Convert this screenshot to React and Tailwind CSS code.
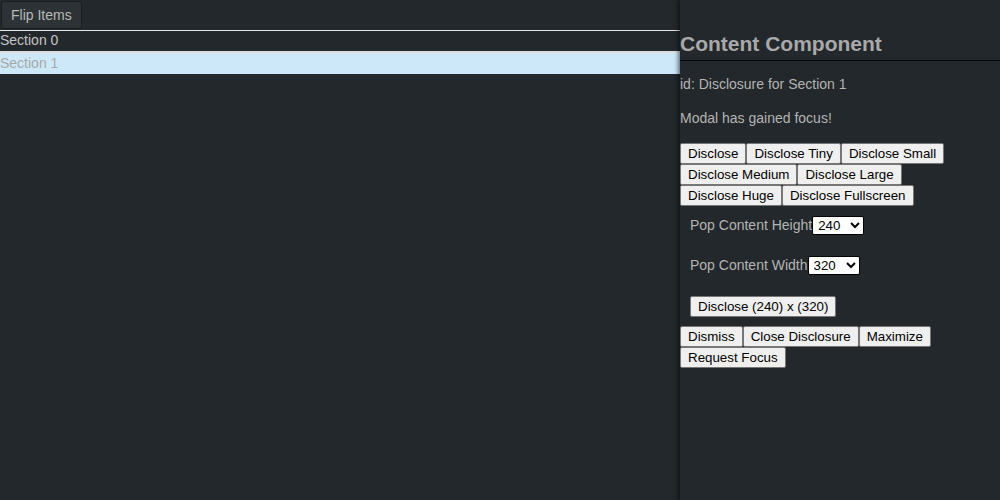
import { useState } from "react";

const btn =
  "border border-[#767676] bg-[#efefef] text-black rounded-[2px] px-[7px] py-[2px] leading-[15px] text-[13.33px] h-[21px] whitespace-nowrap";

export default function App() {
  const [height, setHeight] = useState("240");
  const [width, setWidth] = useState("320");

  return (
    <div className="flex h-[500px] w-[1000px] bg-[#22282b] text-[14px] font-['Liberation_Sans',Arial,sans-serif] overflow-hidden">
      <div className="flex-1 flex flex-col">
        <div className="h-[31px] flex items-start pt-px pl-px border-b border-[#e6e6e6]">
          <button className="h-[28px] px-[9px] bg-[#2c3235] border border-[#1a1e20] rounded-[3px] text-[#b8b8b8] text-[14px] leading-[16px]">
            Flip Items
          </button>
        </div>
        <div className="h-[20px] leading-[18px] text-[#c4c4c4]">Section 0</div>
        <div className="h-[23px] leading-[21px] bg-[#cce8f9] border-t-2 border-[#dcdcdc] text-[#a8a8a8]">
          Section 1
        </div>
      </div>

      <div className="w-[320px] flex flex-col shadow-[-2px_0_4px_rgba(0,0,0,0.5)] text-[#b4b4b4]">
        <h2 className="mt-[32px] pb-[4px] leading-[24px] text-[21px] font-bold text-[#a9a9a9] border-b border-black">
          Content Component
        </h2>
        <p className="mt-[15px] leading-[16px]">id: Disclosure for Section 1</p>
        <p className="mt-[18px] leading-[16px]">Modal has gained focus!</p>

        <div className="mt-[17px] flex flex-wrap">
          <button className={btn}>Disclose</button>
          <button className={btn}>Disclose Tiny</button>
          <button className={btn}>Disclose Small</button>
          <button className={btn}>Disclose Medium</button>
          <button className={btn}>Disclose Large</button>
          <button className={btn}>Disclose Huge</button>
          <button className={btn}>Disclose Fullscreen</button>
        </div>

        <div className="pl-[10px] flex flex-col">
          <label className="mt-[10px] flex items-center h-[19px]">
            Pop Content Height
            <select
              value={height}
              onChange={(e) => setHeight(e.target.value)}
              className="w-[52px] h-[19px] bg-white text-black border border-black rounded-[2px] text-[13.33px] pl-px"
            >
              <option>120</option>
              <option>240</option>
              <option>480</option>
            </select>
          </label>
          <label className="mt-[21px] flex items-center h-[19px]">
            Pop Content Width
            <select
              value={width}
              onChange={(e) => setWidth(e.target.value)}
              className="w-[52px] h-[19px] bg-white text-black border border-black rounded-[2px] text-[13.33px] pl-px"
            >
              <option>160</option>
              <option>320</option>
              <option>640</option>
            </select>
          </label>
          <div className="mt-[21px]">
            <button className={btn}>
              Disclose ({height}) x ({width})
            </button>
          </div>
        </div>

        <div className="mt-[9px] flex flex-wrap">
          <button className={btn}>Dismiss</button>
          <button className={btn}>Close Disclosure</button>
          <button className={btn}>Maximize</button>
          <button className={btn}>Request Focus</button>
        </div>
      </div>
    </div>
  );
}
